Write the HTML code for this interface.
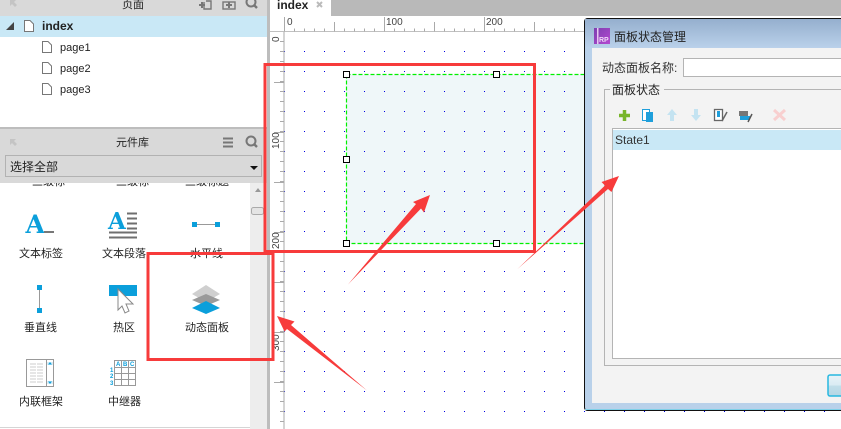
<!DOCTYPE html>
<html><head><meta charset="utf-8"><style>
html,body{margin:0;padding:0;background:#fff;width:841px;height:429px;overflow:hidden}
svg{display:block}
text{font-family:"Liberation Sans","Noto Sans CJK SC",sans-serif;fill:#222}
</style></head><body>
<svg width="841" height="429" viewBox="0 0 841 429" xmlns="http://www.w3.org/2000/svg">
<defs>
<pattern id="d" x="284" y="31" width="20" height="20" patternUnits="userSpaceOnUse"><rect width="1" height="1" fill="#0000e0"/></pattern>
<linearGradient id="tb" x1="0" y1="0" x2="0" y2="1"><stop offset="0" stop-color="#95afce"/><stop offset="1" stop-color="#bad1ea"/></linearGradient>
<linearGradient id="bt" x1="0" y1="0" x2="0" y2="1"><stop offset="0" stop-color="#e8f3f8"/><stop offset=".5" stop-color="#d9ebf3"/><stop offset=".5" stop-color="#c2dfea"/><stop offset="1" stop-color="#b4d6e4"/></linearGradient>
<linearGradient id="rp" x1="0" y1="0" x2="1" y2="1"><stop offset="0" stop-color="#7d3fb0"/><stop offset="1" stop-color="#b448d0"/></linearGradient>
</defs>
<rect width="841" height="429" fill="#fff"/>

<!-- tab strip -->
<rect x="331" y="0" width="510" height="16" fill="#b9b9b9"/>
<text x="277" y="9" font-size="12" font-weight="bold">index</text>
<path d="M317 2l5 5m0-5l-5 5" stroke="#bbb" stroke-width="2"/>

<!-- canvas grid -->
<rect x="284" y="31" width="557" height="381" fill="url(#d)"/>
<rect x="346" y="74.5" width="238" height="169" fill="#eff7f9"/>
<rect x="284" y="31" width="300" height="381" fill="url(#d)"/>
<path d="M346.5 74.5H584M346.5 74.5V243.5H584" fill="none" stroke="#00f000" stroke-width="1.2" stroke-dasharray="4 2"/>
<g fill="#fff" stroke="#000" stroke-width="1">
<rect x="343.5" y="71.5" width="6" height="6"/><rect x="493.5" y="71.5" width="6" height="6"/>
<rect x="343.5" y="156.5" width="6" height="6"/><rect x="343.5" y="240.5" width="6" height="6"/>
<rect x="493.5" y="240.5" width="6" height="6"/>
</g>

<!-- rulers -->
<rect x="270" y="16" width="571" height="15" fill="#fff"/>
<path d="M270 31.5H841" stroke="#c0c0c0"/>
<path d="M284 30H841" stroke="#aaa" stroke-width="3" stroke-dasharray="1 9"/>
<path d="M284.5 17V31M334.5 22V31M384.5 17V31M434.5 22V31M484.5 17V31M534.5 22V31" stroke="#aaa"/>
<text x="287" y="25" font-size="10" style="fill:#444">0</text>
<text x="386" y="25" font-size="10" style="fill:#444">100</text>
<text x="486" y="25" font-size="10" style="fill:#444">200</text>
<path d="M284 32V429" stroke="#aaa" stroke-width="1"/>
<path d="M282 32V429" stroke="#aaa" stroke-width="4" stroke-dasharray="1 9" stroke-dashoffset="-9"/>
<path d="M274 82.5H284M274 132.5H284M274 182.5H284M274 232.5H284M274 282.5H284M274 332.5H284M274 382.5H284" stroke="#aaa"/>
<g font-size="10">
<text transform="translate(279,42) rotate(-90)" style="fill:#444">0</text>
<text transform="translate(279,149) rotate(-90)" style="fill:#444">100</text>
<text transform="translate(279,249) rotate(-90)" style="fill:#444">200</text>
<text transform="translate(279,351) rotate(-90)" style="fill:#444">300</text>
</g>

<!-- left pages panel -->
<rect x="0" y="0" width="267" height="16" fill="#d9d9d9"/>
<rect x="267" y="0" width="3" height="429" fill="#bdbdbd"/>
<rect x="0" y="16" width="267" height="21" fill="#c9e8f6"/>
<path d="M10 0l6 0-2 2 3 3-2 2-3-3-2 2z" fill="#c4c4c4"/>
<text x="122" y="8" font-size="11">页面</text>
<g fill="none" stroke="#777" stroke-width="1.4">
<path d="M204 2V9H211V1H206"/><path d="M199 5H205M202 2V8" stroke-width="2"/>
<rect x="223" y="2" width="12" height="7"/><path d="M226 5H232M229 2V8" stroke-width="2"/>
<circle cx="251" cy="2" r="4.500" stroke-width="2"/><path d="M254 5L257 8" stroke-width="2.400"/>
</g>
<path d="M6 30L14 22V30Z" fill="#444"/>
<g fill="#fff" stroke="#777" stroke-width="1">
<path d="M24.500 20.500H30L33.500 24V31.500H24.500Z"/>
<path d="M42.500 41.500H48L51.500 45V52.500H42.500Z"/>
<path d="M42.500 62.500H48L51.500 66V73.500H42.500Z"/>
<path d="M42.500 83.500H48L51.500 87V94.500H42.500Z"/>
</g>
<text x="42" y="30" font-size="12" font-weight="bold">index</text>
<text x="60" y="51" font-size="11">page1</text>
<text x="60" y="72" font-size="11">page2</text>
<text x="60" y="93" font-size="11">page3</text>

<!-- widgets content (clipped labels first) -->
<g font-size="11">
<text x="32" y="185">三级标</text><text x="116" y="185">三级标</text><text x="185" y="185">三级标题</text>
</g>
<rect x="0" y="128" width="267" height="55" fill="#d9d9d9"/>
<rect x="0" y="127" width="267" height="2" fill="#bdbdbd"/>
<path d="M10 139l6 0-2 2 3 3-2 2-3-3-2 2z" fill="#c4c4c4"/>
<text x="116" y="146" font-size="11">元件库</text>
<path d="M223 138.500H233M223 142.500H233M223 146.500H233" stroke="#777" stroke-width="2"/>
<circle cx="251" cy="141" r="4.500" fill="none" stroke="#777" stroke-width="2"/><path d="M254 144L257 147" stroke="#777" stroke-width="2.400"/>
<rect x="5.500" y="155.500" width="256" height="21" fill="#d9d9d9" stroke="#b2b2b2"/>
<text x="10" y="171" font-size="12">选择全部</text>
<path d="M250 166H258L254 170Z" fill="#111"/>

<!-- scrollbar -->
<rect x="250" y="183" width="17" height="246" fill="#ededed"/>
<path d="M255 192L258 188L261 192Z" fill="#999"/>
<rect x="251.500" y="207.500" width="12" height="7" rx="2" fill="#e4e4e4" stroke="#aaa"/>
<path d="M0 427.500H250" stroke="#d5d5d5"/>

<!-- widget icons -->
<text x="25.500" y="233" font-size="25" font-weight="bold" style="font-family:'DejaVu Serif',serif;fill:#0b9fdb">A</text>
<rect x="44" y="231" width="10" height="2" fill="#777"/>
<text x="108" y="229" font-size="23" font-weight="bold" style="font-family:'DejaVu Serif',serif;fill:#0b9fdb">A</text>
<path d="M127 213.500H137M127 218.500H137M127 223.500H137M127 228.500H137M109 232.500H137M109 237.500H137" stroke="#6f6f6f" stroke-width="2"/>
<path d="M197 224.500H217" stroke="#999"/>
<rect x="192" y="222" width="5" height="5" fill="#0b9fdb"/><rect x="215" y="222" width="5" height="5" fill="#0b9fdb"/>
<path d="M39.500 289V310" stroke="#999"/>
<rect x="37" y="285" width="5" height="5" fill="#0b9fdb"/><rect x="37" y="308" width="5" height="5" fill="#0b9fdb"/>
<rect x="109" y="285" width="28" height="11" fill="#0b9fdb"/>
<path d="M118 289V310L122 306L125 313L129 311L126 304L133 304Z" fill="#fff" stroke="#888"/>
<path d="M206 285L220 294L206 302L192 294Z" fill="#cfcfcf"/>
<path d="M206 294L220 300L206 306L192 300Z" fill="#9a9a9a"/>
<path d="M206 301L220 308L206 314L192 308Z" fill="#0b9fdb"/>
<rect x="26.500" y="359.500" width="27" height="27" fill="#fff" stroke="#999"/>
<path d="M46.500 360V386" stroke="#999"/>
<path d="M30 364H43M30 367H43M30 370H43M30 373H43M30 376H43M30 379H43M30 382H43" stroke="#ccc" stroke-dasharray="6 1"/>
<path d="M47 362H53V365H47ZM47 381H53V384H47Z" fill="#d9eef8"/><path d="M48 364.500L50 362L52 364.500ZM48 381.500L50 384L52 381.500Z" fill="#0b9fdb"/>
<g stroke="#999" fill="none"><rect x="114.500" y="360.500" width="21" height="25"/><path d="M114 367.500H136M114 373.500H136M114 379.500H136M121.500 361V385M128.500 361V385"/></g>
<g><text x="116" y="366" font-size="6" font-weight="bold" style="fill:#0b9fdb">A</text><text x="123" y="366" font-size="6" font-weight="bold" style="fill:#0b9fdb">B</text><text x="130" y="366" font-size="6" font-weight="bold" style="fill:#0b9fdb">C</text>
<text x="110" y="372" font-size="6" font-weight="bold" style="fill:#0b9fdb">1</text><text x="110" y="378" font-size="6" font-weight="bold" style="fill:#0b9fdb">2</text><text x="110" y="385" font-size="6" font-weight="bold" style="fill:#0b9fdb">3</text></g>

<!-- widget labels -->
<g font-size="11">
<text x="19" y="257">文本标签</text><text x="102" y="257">文本段落</text><text x="190" y="257">水平线</text>
<text x="24" y="331">垂直线</text><text x="113" y="331">热区</text><text x="185" y="331">动态面板</text>
<text x="19" y="405">内联框架</text><text x="108" y="405">中继器</text>
</g>

<!-- dialog -->
<rect x="584.500" y="18.500" width="260" height="392" rx="3" fill="#b9d1ea" stroke="#111"/>
<rect x="585" y="19" width="256" height="29" fill="url(#tb)"/>
<rect x="592" y="48" width="249" height="355" fill="#f3f3f3"/>
<rect x="585" y="409" width="256" height="1" fill="#7fd0e8"/>
<rect x="594" y="28" width="16" height="16" fill="url(#rp)"/>
<rect x="597" y="28" width="1.500" height="16" fill="#e9c8f2"/>
<text x="599" y="42" font-size="7" font-weight="bold" style="fill:#f0d8f8">RP</text>
<text x="614" y="41" font-size="12">面板状态管理</text>
<text x="602" y="72" font-size="12" style="fill:#333">动态面板名称:</text>
<rect x="683.500" y="58.500" width="170" height="18" fill="#fff" stroke="#b4b4b4"/>
<rect x="604.500" y="89.500" width="250" height="276" fill="none" stroke="#b4b4b4"/>
<rect x="610" y="85" width="54" height="10" fill="#f3f3f3"/>
<text x="612" y="94" font-size="12">面板状态</text>
<!-- toolbar -->
<path d="M624.500 110V121M619 115.500H630" stroke="#78b52a" stroke-width="3.500"/>
<rect x="642.500" y="109.500" width="7" height="11" fill="#fff" stroke="#1f9fdb"/><rect x="646" y="112" width="7" height="10" fill="#1f9fdb"/>
<path d="M672 109L677 115H674V121H670V115H667Z" fill="#c4e3f1"/>
<path d="M696 121L701 115H698V109H694V115H691Z" fill="#c4e3f1"/>
<rect x="714.500" y="109.500" width="8" height="11" fill="#fff" stroke="#666" stroke-width="1.300"/>
<rect x="717" y="111" width="3" height="6" fill="#1f9fdb"/><path d="M722 121L727 112" stroke="#666" stroke-width="1.500"/>
<rect x="739" y="111" width="9" height="5" fill="#777"/><rect x="740" y="116" width="10" height="4" fill="#1f9fdb"/><path d="M748 122L752 114" stroke="#555" stroke-width="1.500"/>
<path d="M774 110L785 120M785 110L774 120" stroke="#f8cfcf" stroke-width="3"/>
<!-- list -->
<rect x="612.500" y="128.500" width="240" height="230" fill="#fff" stroke="#b4b4b4"/>
<rect x="613" y="130" width="228" height="20" fill="#c9e8f6"/>
<text x="615" y="144" font-size="12" style="fill:#333">State1</text>
<!-- button -->
<rect x="828" y="375" width="30" height="21" rx="2" fill="url(#bt)" stroke="#27b8e0" stroke-width="1.500"/>
<path d="M584 411.500H841" stroke="#0000e0" stroke-dasharray="1 19" stroke-width="1"/>

<!-- red annotations -->
<rect x="265" y="64.500" width="269.500" height="187" fill="none" stroke="#f73b3b" stroke-width="3"/>
<rect x="148" y="253.500" width="125" height="106" fill="none" stroke="#f73b3b" stroke-width="3"/>
<g fill="#f73b3b">
<path d="M348 284.500L416 204L413 202L430 195L424 212.500L421 208.500Z"/>
<path d="M517.500 269L605 185.500L601.500 182L619 176L611.500 192L608 189Z"/>
<path d="M367 390.500L291 325L294.500 321.500L277 316L284.500 331.500L287 329Z"/>
</g>
</svg>
</body></html>
